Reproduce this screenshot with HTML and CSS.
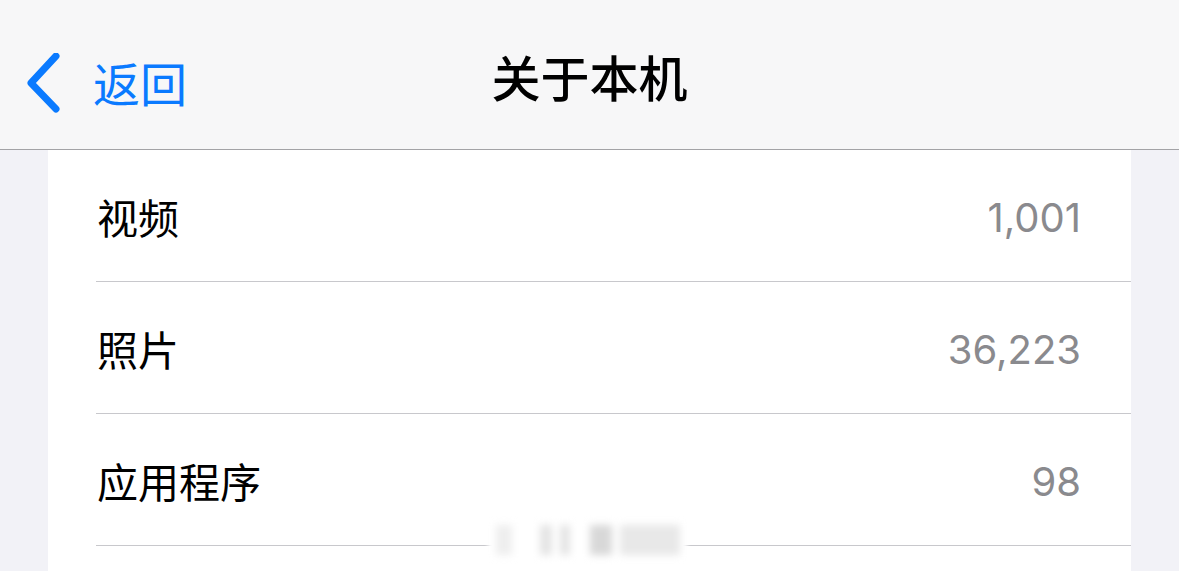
FILE: index.html
```html
<!DOCTYPE html>
<html lang="zh-CN">
<head>
<meta charset="utf-8">
<title>关于本机</title>
<link rel="stylesheet" href="styles.css">
</head>
<body>
<header class="nav">
  <a class="back">
    <svg class="chev" width="40" height="64" viewBox="0 0 40 64"><path d="M29 3 L4 30 L29 56" fill="none" stroke="#0a7aff" stroke-width="7" stroke-linecap="round" stroke-linejoin="round"/></svg>
    <span class="back-text">返回</span>
  </a>
  <h1 class="title">关于本机</h1>
</header>
<main class="content">
  <section class="card">
    <div class="row"><span class="label">视频</span><span class="value">1,001</span></div>
    <div class="row"><span class="label">照片</span><span class="value">36,223</span></div>
    <div class="row"><span class="label">应用程序</span><span class="value">98</span></div>
    <div class="row row-last"></div>
  </section>
  <div class="ghost">
    <span class="g g1"></span><span class="g g2"></span><span class="g g3"></span><span class="g g4"></span><span class="g g5"></span>
  </div>
</main>
</body>
</html>
```
FILE: styles.css
```css
html, body {
  margin: 0;
  padding: 0;
  width: 1179px;
  height: 571px;
  overflow: hidden;
  background: #f2f2f7;
  font-family: "Noto Sans CJK SC", "Noto Sans", sans-serif;
}
.nav {
  height: 149px;
  border-bottom: 1px solid #a3a3a6;
  background: #f7f7f8;
  position: relative;
  display: flex;
  align-items: center;
  justify-content: center;
}
.back {
  position: absolute;
  left: 27px;
  top: 53px;
  display: flex;
  align-items: center;
  color: #0a7aff;
}
.chev {
  display: block;
}
.back-text {
  font-size: 47px;
  line-height: 60px;
  margin-left: 26px;
  margin-top: -7px;
}
.title {
  margin: 0;
  font-size: 49px;
  font-weight: 500;
  color: #000;
  line-height: 60px;
  margin-top: 2px;
}
.content {
  position: relative;
  padding: 0 48px;
}
.card {
  background: #fff;
  padding-left: 48px;
}
.row {
  height: 131px;
  border-bottom: 1px solid #c8c8cc;
  display: flex;
  align-items: center;
  justify-content: space-between;
  padding-right: 50px;
}
.row-last {
  height: 26px;
  border-bottom: none;
}
.label {
  font-size: 41px;
  color: #000;
  margin-left: 1px;
  margin-top: 1px;
}
.value {
  font-family: "Inter", "Noto Sans", sans-serif;
  font-size: 40px;
  color: #8a8a8e;
  margin-top: 3px;
}
.ghost {
  position: absolute;
  left: 488px;
  top: 372px;
  width: 199px;
  height: 36px;
  background: #fff;
  filter: blur(2px);
  display: flex;
  align-items: center;
  gap: 8px;
  padding-left: 8px;
  box-sizing: border-box;
}
.g {
  display: block;
  height: 30px;
  background: #e4e4e4;
  filter: blur(3px);
}
.g1 { width: 16px; background: #eeeeee; }
.g2 { width: 12px; margin-left: 20px; }
.g3 { width: 10px; }
.g4 { width: 22px; margin-left: 12px; background: #d8d8d8; }
.g5 { width: 60px; background: #e8e8e8; }
```
